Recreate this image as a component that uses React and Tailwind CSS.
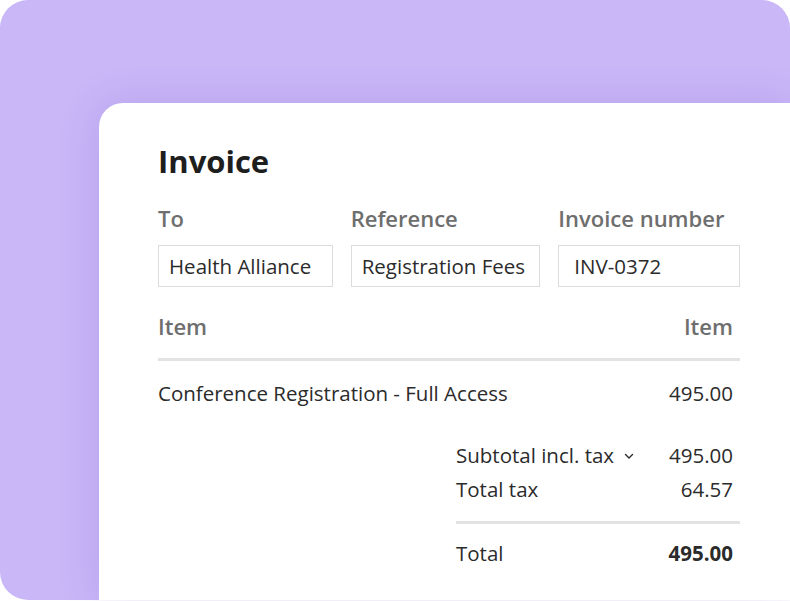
import React from "react";

const font = { fontFamily: "'Open Sans', 'Noto Sans', sans-serif" };

function Field({ label, value, width, padLeft }) {
  return (
    <div className="flex flex-col" style={{ width }}>
      <span className="text-[22px] font-semibold text-[#6e6e6e] leading-[28px] whitespace-nowrap">{label}</span>
      <div className={`mt-[13px] h-[42px] border border-[#dcdcdc] flex items-center text-[20.5px] text-[#2b2b2b] whitespace-nowrap ${padLeft}`}>
        {value}
      </div>
    </div>
  );
}

function Row({ label, value, bold, chevron }) {
  return (
    <div className="flex items-center justify-between text-[20.5px] text-[#2b2b2b] h-[34px] pr-[7px]">
      <span className="flex items-center gap-[10px]">
        {label}
        {chevron && (
          <svg width="10" height="7" viewBox="0 0 10 7" className="mt-[2px]">
            <path d="M1.5 1.5 L5 5 L8.5 1.5" fill="none" stroke="#2b2b2b" strokeWidth="1.4" strokeLinecap="round" strokeLinejoin="round" />
          </svg>
        )}
      </span>
      <span className={bold ? "font-bold" : ""}>{value}</span>
    </div>
  );
}

export default function App() {
  return (
    <div className="w-[790px] h-[601px] bg-white overflow-hidden" style={font}>
      <div className="h-[600px] bg-[#c9b7f8] rounded-[28px] pt-[103px] pl-[99px]">
        <div className="h-full bg-white rounded-tl-[24px] shadow-[0_0_40px_rgba(90,50,170,0.16)] pl-[59px] pt-[40px]">
          <div className="w-[582px]">
            <h1 className="text-[31px] font-bold text-[#1e1e1e] leading-[36px]">Invoice</h1>

            <div className="flex mt-[25px] gap-[18px]">
              <Field label="To" value="Health Alliance" width="175px" padLeft="pl-[10px]" />
              <Field label="Reference" value="Registration Fees" width="190px" padLeft="pl-[10px]" />
              <Field label="Invoice number" value="INV-0372" width="182px" padLeft="pl-[15px]" />
            </div>

            <div className="flex justify-between mt-[25px] pr-[7px] text-[22px] font-semibold text-[#6e6e6e] leading-[28px]">
              <span>Item</span>
              <span>Item</span>
            </div>
            <div className="mt-[18px] h-[3px] bg-[#e3e3e3]" />

            <div className="flex justify-between mt-[18px] pr-[7px] text-[20.5px] text-[#2b2b2b] leading-[28px]">
              <span>Conference Registration - Full Access</span>
              <span>495.00</span>
            </div>

            <div className="ml-auto w-[284px] mt-[31px]">
              <Row label="Subtotal incl. tax" value="495.00" chevron />
              <Row label="Total tax" value="64.57" />
              <div className="mt-[15px] h-[3px] bg-[#e3e3e3]" />
              <div className="mt-[12px]">
                <Row label="Total" value="495.00" bold />
              </div>
            </div>
          </div>
        </div>
      </div>
    </div>
  );
}
